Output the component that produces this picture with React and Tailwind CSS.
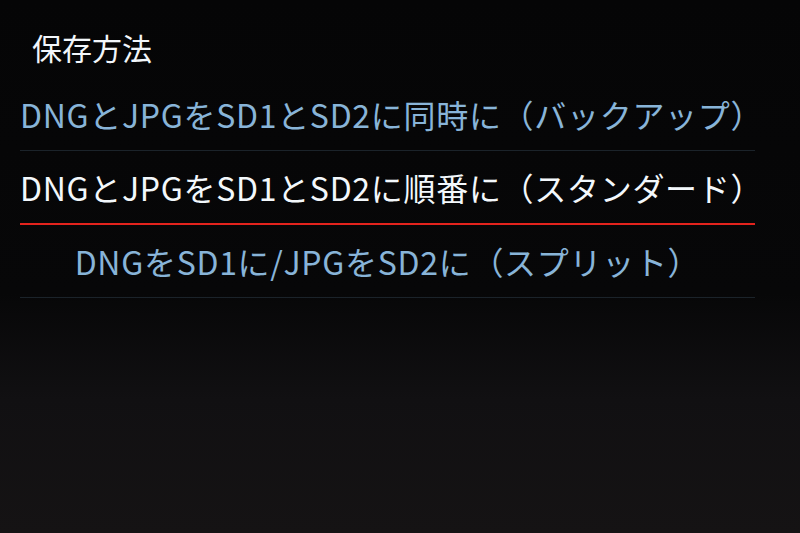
const options = [
  { label: 'DNGとJPGをSD1とSD2に同時に（バックアップ）', selected: false },
  { label: 'DNGとJPGをSD1とSD2に順番に（スタンダード）', selected: true },
  { label: 'DNGをSD1に/JPGをSD2に（スプリット）', selected: false },
];

export default function App() {
  return (
    <div
      className="relative h-[533px] w-[800px] overflow-hidden bg-[#060607] bg-[linear-gradient(180deg,#050506_0%,#070708_55%,#111012_75%,#151314_100%)]"
      style={{ fontFamily: '"Noto Sans CJK JP", "Noto Sans", sans-serif' }}
    >
      <div className="pl-[32px] pt-[30px] text-[30px] leading-[34px] text-[#f2f6fa]">保存方法</div>

      <div className="ml-[20px] mt-[14px] flex w-[735px] flex-col">
        {options.map((item) => (
          <div key={item.label} className="flex flex-col">
            <div
              className={
                item.selected
                  ? 'flex h-[72px] items-center justify-center text-[32px] tracking-[0.7px] text-[#f3f8fc]'
                  : 'flex h-[72px] items-center justify-center text-[32px] tracking-[0.7px] text-[#88b4d8]'
              }
            >
              {item.label}
            </div>
            {item.selected ? (
              <div className="h-[1.5px] bg-[#e3231d]" />
            ) : (
              <div className="h-px bg-[#1b232a]" />
            )}
          </div>
        ))}
      </div>
    </div>
  );
}
